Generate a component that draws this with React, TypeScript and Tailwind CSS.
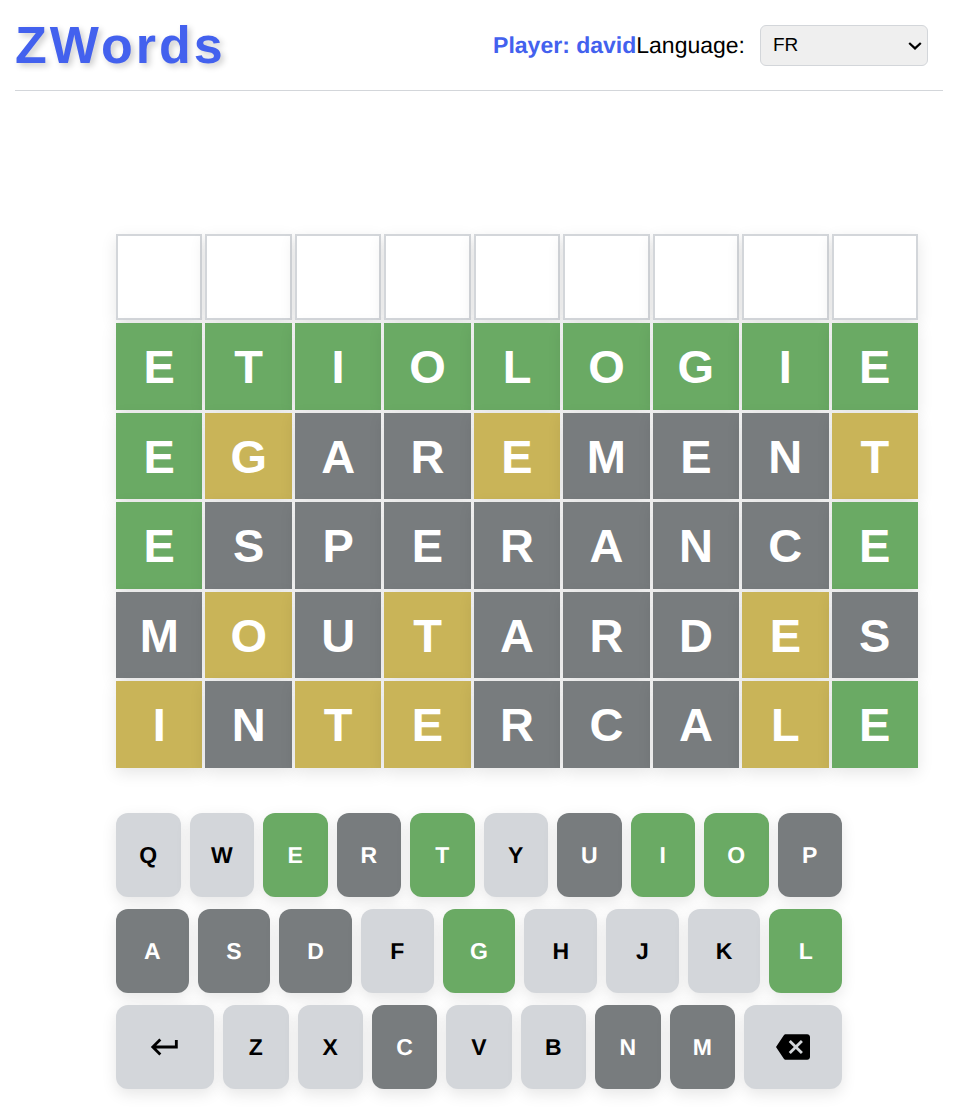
import { useState } from "react";
import { MdBackspace, MdKeyboardReturn } from "react-icons/md";
import { clsx } from "clsx";

type Status = "correct" | "present" | "absent" | "empty";

const statusByCode: Record<string, Status> = {
  g: "correct",
  y: "present",
  x: "absent",
  "-": "empty",
};

const guesses: { word: string; marks: string }[] = [
  { word: "         ", marks: "---------" },
  { word: "ETIOLOGIE", marks: "ggggggggg" },
  { word: "EGAREMENT", marks: "gyxxyxxxy" },
  { word: "ESPERANCE", marks: "gxxxxxxxg" },
  { word: "MOUTARDES", marks: "xyxyxxxyx" },
  { word: "INTERCALE", marks: "yxyyxxxyg" },
];

const keyRows: { letters: string; marks: string }[] = [
  { letters: "QWERTYUIOP", marks: "--gxg-xggx" },
  { letters: "ASDFGHJKL", marks: "xxx-g---g" },
  { letters: "ZXCVBNM", marks: "--x--xx" },
];

const tileStyles: Record<Status, string> = {
  correct: "bg-[#6aaa64] text-white",
  present: "bg-[#c9b458] text-white",
  absent: "bg-[#787c7e] text-white",
  empty: "border-2 border-[#d3d6da] bg-white",
};

const keyStyles: Record<Status, string> = {
  correct: "bg-[#6aaa64] text-white",
  present: "bg-[#c9b458] text-white",
  absent: "bg-[#787c7e] text-white",
  empty: "bg-[#d3d6da] text-black",
};

const keyBase =
  "flex h-21 min-w-0 items-center justify-center rounded-xl text-[23px] leading-9 font-bold [text-rendering:geometricPrecision] shadow-[0_5px_15px_rgba(0,0,0,0.1)]";

function Header() {
  const [language, setLanguage] = useState("FR");
  return (
    <header className="flex items-center justify-between border-b border-[#d3d6da] pt-[15px] pr-[15px] pb-[15px]">
      <h1 className="text-[52px] leading-[60px] font-bold tracking-[3px] text-[#4361ee] [text-shadow:3px_3px_6px_rgba(0,0,0,0.2)]">
        ZWords
      </h1>
      <div className="flex items-center text-[23px] [text-rendering:geometricPrecision]">
        <span className="font-bold text-[#4361ee]">Player: david</span>
        <label htmlFor="language">Language:</label>
        <div className="relative ml-[15px]">
          <select
            id="language"
            value={language}
            onChange={(e) => setLanguage(e.target.value)}
            className="block h-[41px] w-42 appearance-none rounded-md border border-[#d3d6da] bg-[#efefef] px-3 text-[19px] leading-7 text-black [text-rendering:auto]"
          >
            <option value="FR">FR</option>
            <option value="EN">EN</option>
          </select>
          <svg
            aria-hidden="true"
            viewBox="0 0 14 8"
            className="pointer-events-none absolute top-[17px] right-[6px] h-2 w-[14px]"
            fill="none"
            stroke="black"
            strokeWidth="2.2"
          >
            <path d="M1.2 1 7 6.4 12.8 1" />
          </svg>
        </div>
      </div>
    </header>
  );
}

function Board() {
  return (
    <section aria-label="Guesses" className="grid gap-[3px]">
      {guesses.map((guess, row) => (
        <div key={row} className="grid grid-cols-9 gap-[3px]">
          {guess.word.split("").map((letter, col) => (
            <div
              key={col}
              className={clsx(
                "flex aspect-square items-center justify-center text-[47px] leading-none font-bold shadow-[0_5px_15px_rgba(0,0,0,0.1)]",
                tileStyles[statusByCode[guess.marks[col]]],
              )}
            >
              {letter.trim()}
            </div>
          ))}
        </div>
      ))}
    </section>
  );
}

function Keyboard() {
  return (
    <section aria-label="Keyboard" className="mr-[76px] flex flex-col gap-3">
      {keyRows.map((row, index) => {
        const isLast = index === keyRows.length - 1;
        return (
          <div key={row.letters} className="flex gap-[9px]">
            {isLast && (
              <button
                type="button"
                aria-label="Enter"
                className={clsx(keyBase, keyStyles.empty, "flex-[1.5]")}
              >
                <MdKeyboardReturn size={34} />
              </button>
            )}
            {row.letters.split("").map((letter, i) => (
              <button
                key={letter}
                type="button"
                className={clsx(keyBase, keyStyles[statusByCode[row.marks[i]]], "flex-1")}
              >
                {letter}
              </button>
            ))}
            {isLast && (
              <button
                type="button"
                aria-label="Backspace"
                className={clsx(keyBase, keyStyles.empty, "flex-[1.5]")}
              >
                <MdBackspace size={34} />
              </button>
            )}
          </div>
        );
      })}
    </section>
  );
}

export default function App() {
  return (
    <div className="bg-white pr-[13px] pl-[15px] font-['Liberation_Sans',Arial,sans-serif] text-black">
      <Header />
      <main className="flex flex-col gap-[45px] pt-[143px] pr-[25px] pb-6 pl-[101px]">
        <Board />
        <Keyboard />
      </main>
    </div>
  );
}
